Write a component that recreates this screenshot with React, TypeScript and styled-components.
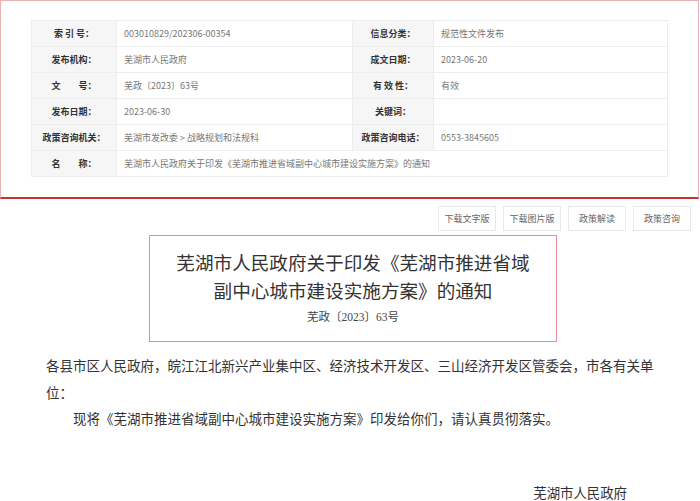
import * as React from 'react';
import styled, {createGlobalStyle} from 'styled-components';

const GlobalStyle = createGlobalStyle`
  body {
    margin: 0;
    background: #fff;
    font-family: "Noto Sans CJK SC", "Noto Sans", sans-serif;
    color: #333;
  }
`;

type InfoItem = {label: string; value: string};

const infoRows: InfoItem[][] = [
  [
    {label: '索 引 号：', value: '003010829/202306-00354'},
    {label: '信息分类：', value: '规范性文件发布'},
  ],
  [
    {label: '发布机构：', value: '芜湖市人民政府'},
    {label: '成文日期：', value: '2023-06-20'},
  ],
  [
    {label: '文　　号：', value: '芜政〔2023〕63号'},
    {label: '有 效 性：', value: '有效'},
  ],
  [
    {label: '发布日期：', value: '2023-06-30'},
    {label: '关键词：', value: ''},
  ],
  [
    {label: '政策咨询机关：', value: '芜湖市发改委 > 战略规划和法规科'},
    {label: '政策咨询电话：', value: '0553-3845605'},
  ],
];

const actions = ['下载文字版', '下载图片版', '政策解读', '政策咨询'];

const App = () => {
  return (
    <Page>
      <GlobalStyle />
      <InfoPanel>
        <InfoTable>
          <colgroup>
            <col style={{width: 85}} />
            <col style={{width: 236}} />
            <col style={{width: 81}} />
            <col />
          </colgroup>
          <tbody>
            {infoRows.map((row, i) => (
              <Row key={i}>
                {row.map((item) => (
                  <React.Fragment key={item.label}>
                    <LabelCell>{item.label}</LabelCell>
                    <ValueCell>{item.value}</ValueCell>
                  </React.Fragment>
                ))}
              </Row>
            ))}
            <Row>
              <LabelCell>名　　称：</LabelCell>
              <ValueCell colSpan={3}>
                芜湖市人民政府关于印发《芜湖市推进省域副中心城市建设实施方案》的通知
              </ValueCell>
            </Row>
          </tbody>
        </InfoTable>
      </InfoPanel>

      <Toolbar>
        {actions.map((label) => (
          <ActionButton key={label}>{label}</ActionButton>
        ))}
      </Toolbar>

      <Article>
        <TitleBox>
          <Title>芜湖市人民政府关于印发《芜湖市推进省域副中心城市建设实施方案》的通知</Title>
          <DocNumber>芜政〔2023〕63号</DocNumber>
        </TitleBox>
        <Body>
          <Salutation>
            各县市区人民政府，皖江江北新兴产业集中区、经济技术开发区、三山经济开发区管委会，市各有关单位：
          </Salutation>
          <Paragraph>
            现将《芜湖市推进省域副中心城市建设实施方案》印发给你们，请认真贯彻落实。
          </Paragraph>
          <Signature>芜湖市人民政府</Signature>
        </Body>
      </Article>
    </Page>
  );
};

export default App;

const Page = styled.div`
  width: 700px;
  min-height: 501px;
  overflow: hidden;
`;

const InfoPanel = styled.div`
  width: 699px;
  box-sizing: border-box;
  padding: 19px 30px 20px;
  border: 1px solid #ebb2b6;
  border-bottom: 2px solid #c9332f;
`;

const InfoTable = styled.table`
  width: 100%;
  border-collapse: collapse;
  table-layout: fixed;
  font-size: 9px;
`;

const Row = styled.tr`
  height: 26px;
`;

const LabelCell = styled.td`
  background: #f6f6f6;
  border: 1px solid #ededed;
  color: #333;
  font-weight: bold;
  text-align: center;
  white-space: pre;
  padding: 0;
`;

const ValueCell = styled.td`
  background: #fff;
  border: 1px solid #ededed;
  color: #777;
  padding: 0 0 0 7px;
  white-space: nowrap;
`;

const Toolbar = styled.div`
  display: flex;
  justify-content: flex-end;
  gap: 7px;
  padding: 7px 9px 0 0;
`;

const ActionButton = styled.div`
  width: 58px;
  height: 25px;
  box-sizing: border-box;
  border: 1px solid #e8e8e8;
  display: flex;
  align-items: center;
  justify-content: center;
  font-size: 9px;
  color: #666;
  background: #fff;
`;

const Article = styled.div`
  width: 614px;
  margin: 4px 0 0 46px;
`;

const TitleBox = styled.div`
  width: 408px;
  box-sizing: border-box;
  margin: 0 auto;
  padding: 12px 24px 14px;
  border: 1px solid #e98c93;
  text-align: center;
`;

const Title = styled.div`
  font-size: 18.6px;
  line-height: 28px;
  color: #333;
`;

const DocNumber = styled.div`
  margin-top: 3px;
  font-family: "Liberation Serif", "Noto Sans CJK SC", serif;
  font-size: 11.5px;
  line-height: 20px;
  color: #444;
`;

const Body = styled.div`
  margin-top: 10px;
  font-size: 13.5px;
  line-height: 26.5px;
  color: #333;
`;

const Salutation = styled.p`
  margin: 0;
`;

const Paragraph = styled.p`
  margin: 0;
  text-indent: 2em;
`;

const Signature = styled.p`
  margin: 47px 0 0;
  padding-right: 33px;
  text-align: right;
  font-size: 13.4px;
`;
